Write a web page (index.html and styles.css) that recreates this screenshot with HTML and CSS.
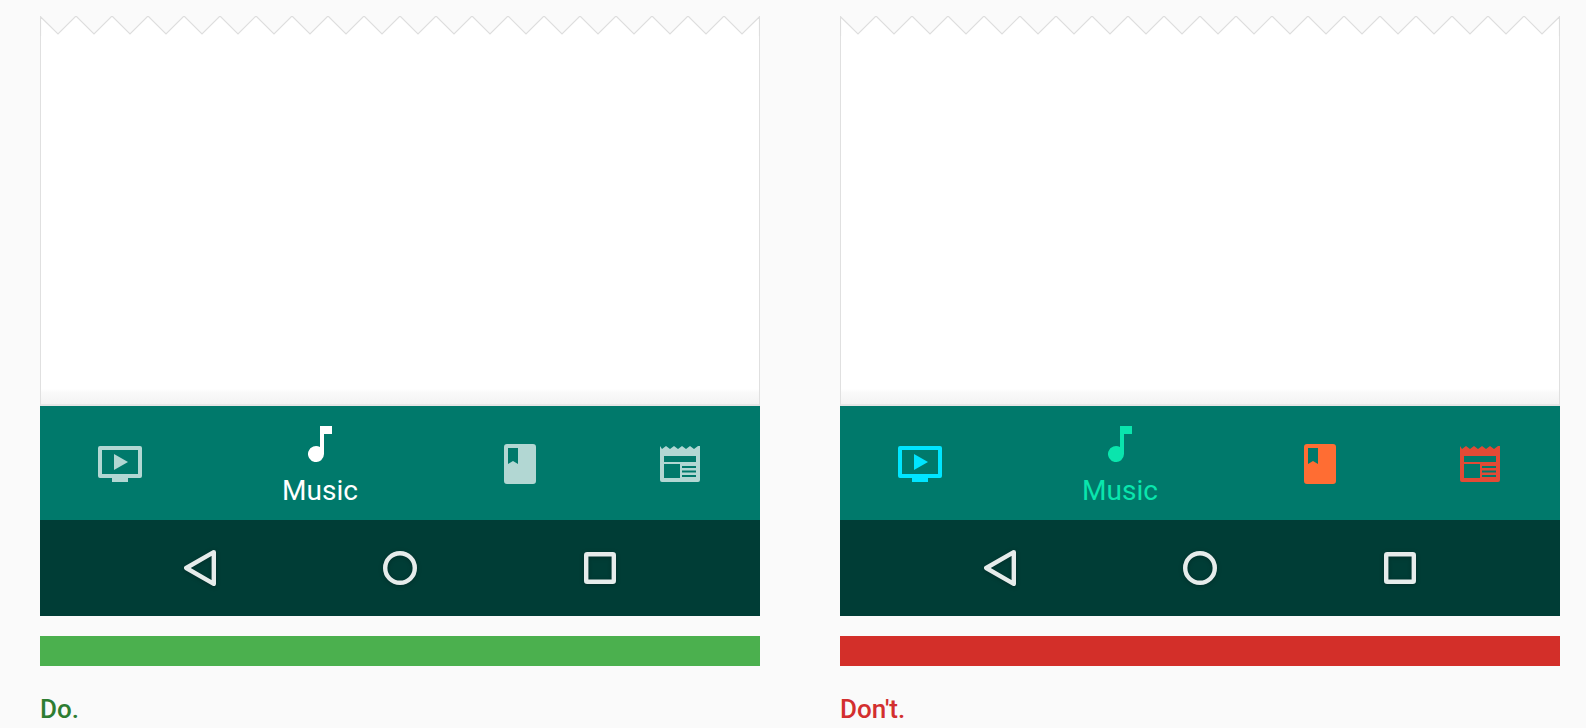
FILE: index.html

```html
<!DOCTYPE html>
<html lang="en">
<head>
  <meta charset="UTF-8">
  <title>Bottom navigation: Do and Don't</title>
  <link rel="stylesheet" href="styles.css">
</head>
<body>

<svg class="defs" width="0" height="0" aria-hidden="true">
  <symbol id="i-tear" viewBox="0 0 720 20">
    <path d="M.5 20V.7L18 18l18-18 18 18 18-18 18 18 18-18 18 18 18-18 18 18 18-18 18 18 18-18 18 18 18-18 18 18 18-18 18 18 18-18 18 18 18-18 18 18 18-18 18 18 18-18 18 18 18-18 18 18 18-18 18 18 18-18 18 18 18-18 18 18 18-18 18 18 18-18 18 18 18-18 18 18L719.500.7V20" fill="#fff" stroke="#dedede" stroke-width="1.2"/>
  </symbol>
  <symbol id="i-tv" viewBox="0 0 44 36">
    <path fill-rule="evenodd" d="M2 0h40a2 2 0 0 1 2 2v28a2 2 0 0 1-2 2H30v4H14v-4H2a2 2 0 0 1-2-2V2a2 2 0 0 1 2-2zM4 4v24h36V4zM16 8l14 8-14 8z"/>
  </symbol>
  <symbol id="i-music" viewBox="0 0 24 36">
    <path d="M12 0h12v8h-8v20a8 8 0 1 1-4-6.930z"/>
  </symbol>
  <symbol id="i-book" viewBox="0 0 32 40">
    <path fill-rule="evenodd" d="M3 0h26a3 3 0 0 1 3 3v34a3 3 0 0 1-3 3H3a3 3 0 0 1-3-3V3a3 3 0 0 1 3-3zM4 4v16l5-3 5 3V4z"/>
  </symbol>
  <symbol id="i-news" viewBox="0 0 40 36">
    <path fill-rule="evenodd" d="M0 0l2 3 4-3 4 3 4-3 4 3 4-3 4 3 4-3 4 3 4-3 2 0v34a2 2 0 0 1-2 2H2a2 2 0 0 1-2-2zM4 10v6h32v-6zM4 18v14h16V18zM22 20v2h14v-2zM22 24.500v2h14v-2zM22 29v2h14v-2z"/>
  </symbol>
  <symbol id="i-back" viewBox="0 0 32 36">
    <path d="M29.800 2.200L2.200 18l27.600 15.800z" fill="none" stroke="currentColor" stroke-width="4.400" stroke-linejoin="round"/>
  </symbol>
  <symbol id="i-home" viewBox="0 0 34 34">
    <circle cx="17" cy="17" r="14.800" fill="none" stroke="currentColor" stroke-width="4.400"/>
  </symbol>
  <symbol id="i-recent" viewBox="0 0 32 32">
    <rect x="2.200" y="2.200" width="27.600" height="27.600" rx="1" fill="none" stroke="currentColor" stroke-width="4.400"/>
  </symbol>
</svg>

<main class="compare">

  <section class="example do">
    <div class="phone">
      <svg class="tear"><use href="#i-tear"/></svg>
      <div class="screen"></div>
      <nav class="tabs">
        <div class="tab"><svg class="icon tv"><use href="#i-tv"/></svg></div>
        <div class="tab active"><svg class="icon music"><use href="#i-music"/></svg><span class="tab-label">Music</span></div>
        <div class="tab"><svg class="icon book"><use href="#i-book"/></svg></div>
        <div class="tab"><svg class="icon news"><use href="#i-news"/></svg></div>
      </nav>
      <div class="sysbar">
        <svg class="back"><use href="#i-back"/></svg>
        <svg class="home"><use href="#i-home"/></svg>
        <svg class="recent"><use href="#i-recent"/></svg>
      </div>
    </div>
    <div class="rule"></div>
    <p class="verdict">Do.</p>
  </section>

  <section class="example dont">
    <div class="phone">
      <svg class="tear"><use href="#i-tear"/></svg>
      <div class="screen"></div>
      <nav class="tabs">
        <div class="tab"><svg class="icon tv"><use href="#i-tv"/></svg></div>
        <div class="tab active"><svg class="icon music"><use href="#i-music"/></svg><span class="tab-label">Music</span></div>
        <div class="tab"><svg class="icon book"><use href="#i-book"/></svg></div>
        <div class="tab"><svg class="icon news"><use href="#i-news"/></svg></div>
      </nav>
      <div class="sysbar">
        <svg class="back"><use href="#i-back"/></svg>
        <svg class="home"><use href="#i-home"/></svg>
        <svg class="recent"><use href="#i-recent"/></svg>
      </div>
    </div>
    <div class="rule"></div>
    <p class="verdict">Don't.</p>
  </section>

</main>

</body>
</html>
```

FILE: styles.css

```css
* { box-sizing: border-box; margin: 0; padding: 0; }
html, body { width: 100%; height: 100%; overflow: hidden; }
body {
  background: #fafafa; font-family: Roboto, sans-serif;
}

.defs { display: block; height: 0; }

.compare {
  display: flex; gap: 80px;
  padding: 16px 0 0 40px;
}

.example { width: 720px; flex: none; }

.phone { display: flex; flex-direction: column; height: 600px; }

.tear { display: block; flex: none; width: 720px; height: 20px; }

.screen {
  flex: 1;
  background: linear-gradient(to bottom, #fff calc(100% - 17px), #fafafa calc(100% - 14px), #f3f3f3 calc(100% - 2px), #e6e6e6 calc(100% - 2px));
  border-left: 1px solid #e0e0e0; border-right: 1px solid #e0e0e0;
}

.tabs {
  display: flex; height: 114px; flex: none;
  background: #00796b; color: #b2d7d3;
}
.tab {
  width: 160px;
  display: flex; flex-direction: column; align-items: center; justify-content: center;
}
.tab.active { width: 240px; color: #fff; justify-content: flex-start; padding-top: 20px; }
.tab-label { font-size: 28px; line-height: 32px; margin-top: 13px; }

.icon { display: block; fill: currentColor; }
.tv { width: 44px; height: 36px; margin-top: 2px; }
.music { width: 24px; height: 36px; }
.book { width: 32px; height: 40px; margin-top: 2px; }
.news { width: 40px; height: 36px; margin-top: 2px; }

.sysbar {
  display: flex; align-items: center; justify-content: center;
  height: 96px; flex: none;
  background: #003d36; color: #e6eceb;
}
.sysbar svg { display: block; filter: drop-shadow(0 1px 2px rgba(0,0,0,0.25)); }
.back { width: 32px; height: 36px; margin-right: 167px; }
.home { width: 34px; height: 34px; margin-right: 167px; }
.recent { width: 32px; height: 32px; }

.rule { height: 30px; margin-top: 20px; }
.do .rule { background: #4bb04e; }
.dont .rule { background: #d32f29; }

.verdict { font-size: 26px; line-height: 32px; font-weight: 500; margin-top: 27px; }
.do .verdict { color: #2e7d32; }
.dont .verdict { color: #d32f2f; }

.dont .tv { color: #00e5ff; }
.dont .active { color: #0ae5ad; }
.dont .book { color: #ff6d33; }
.dont .news { color: #e24a35; }
```
